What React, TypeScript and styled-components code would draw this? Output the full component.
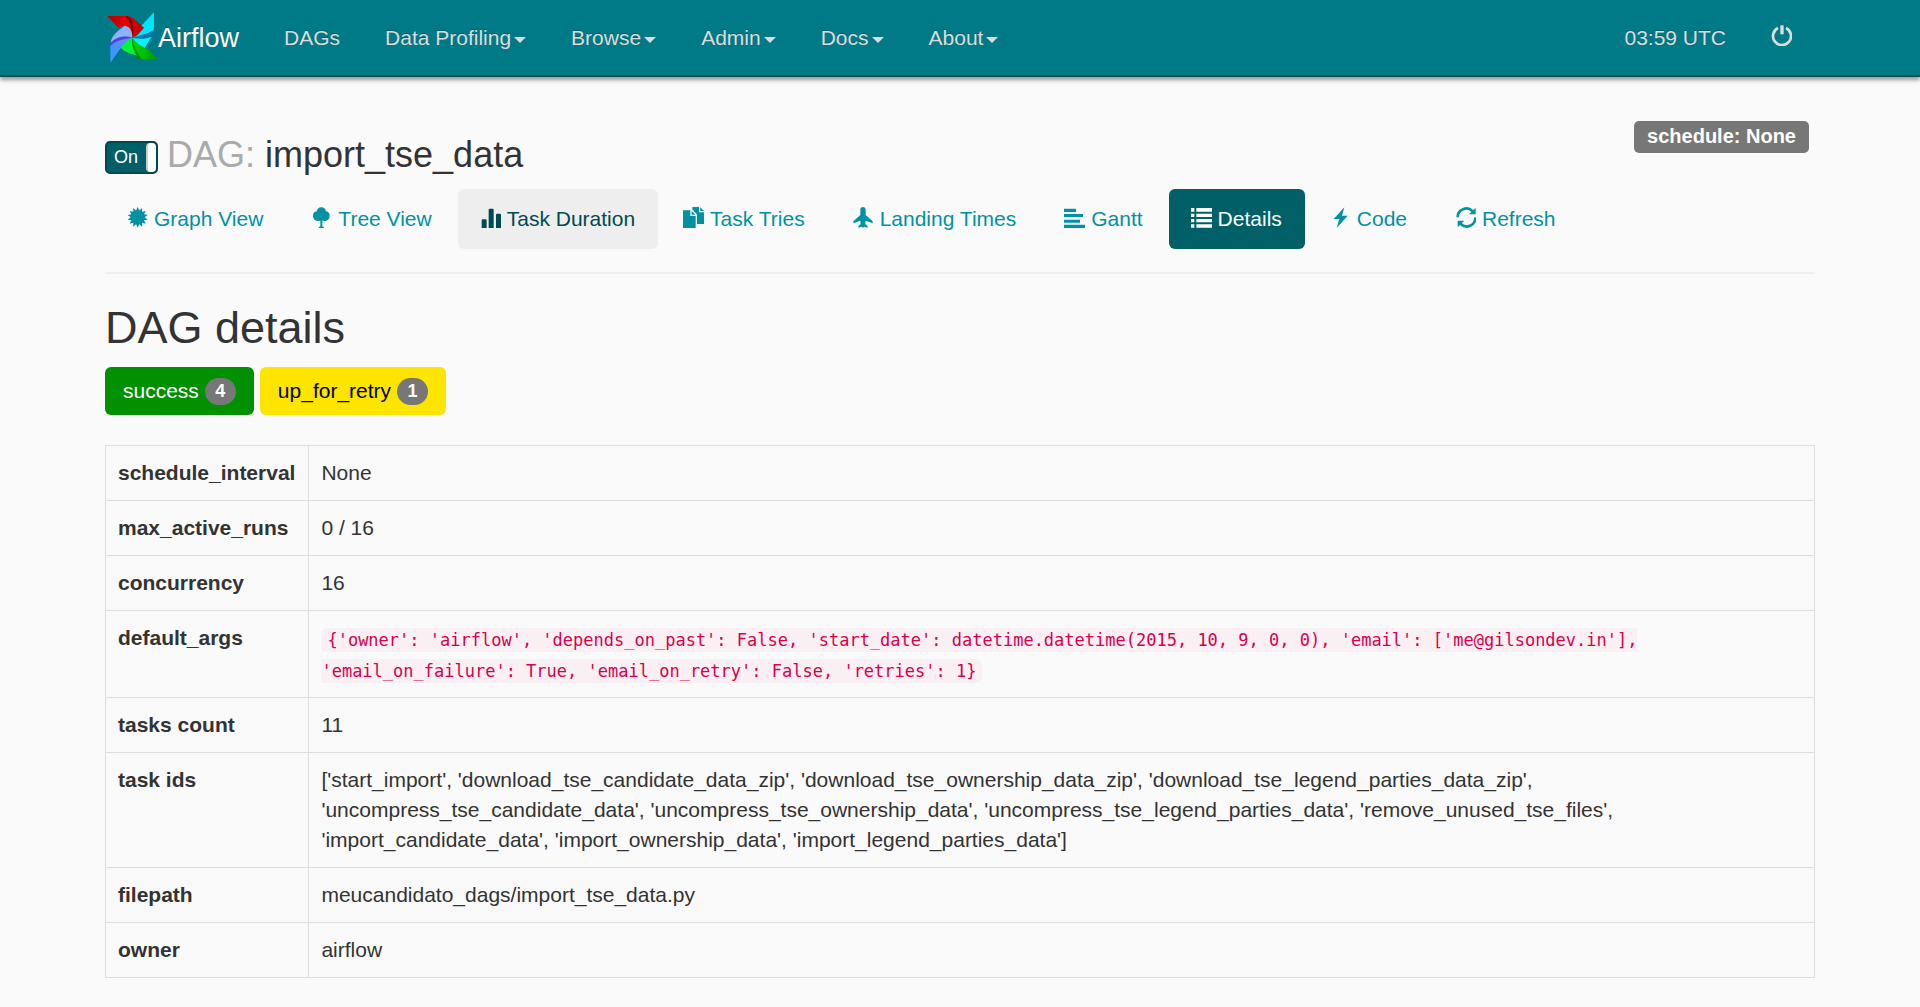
import React, { useState } from "react";
import styled, { createGlobalStyle, css } from "styled-components";

const GlobalStyle = createGlobalStyle`
  *, *::before, *::after { box-sizing: border-box; }
  body {
    margin: 0;
    background: #fafafa;
    color: #333;
    font: 21px/30px "Liberation Sans", Arial, sans-serif;
  }
`;

const container = css`
  width: 100%;
  max-width: 1710px;
  margin: 0 auto;
`;

/* ---------- top bar ---------- */

const Navbar = styled.header`
  background: #007a87;
  border-bottom: 2px solid #004a52;
  box-shadow: 0 3px 4px #999;
`;

const NavbarInner = styled.div`
  ${container}
  display: flex;
  align-items: center;
  min-height: 75px;
`;

const Brand = styled.a`
  display: flex;
  align-items: center;
  padding: 0 23px 0 2px;
  color: #fff;
  font-size: 27px;
  text-decoration: none;
  text-shadow: 0 -1px 0 rgba(0, 0, 0, 0.25);
`;

const Logo = styled.svg`
  width: 51px;
  height: 52px;
`;

const NavList = styled.ul<{ $end?: boolean }>`
  display: flex;
  gap: 1px;
  margin: 0 0 0 ${(p) => (p.$end ? "auto" : "0")};
  padding: 0;
  list-style: none;
`;

const NavLink = styled.a`
  display: flex;
  align-items: center;
  gap: 3px;
  height: 75px;
  padding: 0 22px;
  color: #dcdcdc;
  text-decoration: none;
  text-shadow: 0 -1px 0 rgba(0, 0, 0, 0.25);
`;

const PowerLink = styled(NavLink)`
  padding: 0 23px 4px 22px;
`;

const Caret = styled.span`
  margin-top: 4px;
  border: 6px solid transparent;
  border-top-color: currentColor;
  border-bottom-width: 0;
`;

const IconSvg = styled.svg`
  flex: none;
  width: 21px;
  height: 21px;
  fill: currentColor;
`;

/* ---------- DAG heading ---------- */

const Main = styled.main`
  ${container}
  padding: 44px 0 30px;
`;

const Heading = styled.div`
  display: flex;
  align-items: flex-start;
  justify-content: space-between;
  padding-right: 6px;
`;

const TitleRow = styled.div`
  display: flex;
  align-items: center;
  gap: 9px;
  padding-top: 14px;
`;

const Title = styled.h3`
  margin: 0;
  font-size: 36px;
  line-height: 40px;
  font-weight: 400;
`;

const Muted = styled.span`
  color: #aaa;
`;

const Toggle = styled.label`
  display: flex;
  align-items: stretch;
  justify-content: space-between;
  width: 53px;
  height: 33px;
  margin-top: 4px;
  border: 2px solid #00474f;
  border-radius: 5px;
  background: #005f69;
  color: #fff;
  font-size: 18px;
  line-height: 29px;
  cursor: pointer;
`;

const ToggleText = styled.span`
  padding-left: 7px;
`;

const ToggleHandle = styled.input`
  appearance: none;
  width: 10px;
  margin: 0;
  border-left: 2px solid #ccc;
  border-radius: 4px;
  background: #fff;
`;

const ScheduleLabel = styled.span`
  padding: 0 13px 2px;
  border-radius: 5px;
  background: #777;
  color: #fff;
  font-size: 20px;
  line-height: 30px;
  font-weight: 700;
`;

/* ---------- view tabs ---------- */

const Pills = styled.ul`
  display: flex;
  flex-wrap: wrap;
  gap: 3px;
  margin: 14px 0 23px;
  padding: 0;
  list-style: none;
`;

type PillState = "plain" | "hover" | "active";

const pillColors: Record<PillState, [string, string]> = {
  plain: ["transparent", "#0092a3"],
  hover: ["#eee", "#004a52"],
  active: ["#005f67", "#fff"],
};

const Pill = styled.a<{ $state: PillState }>`
  display: flex;
  align-items: center;
  gap: 6px;
  padding: 15px 23px 15px 22px;
  border-radius: 6px;
  background: ${(p) => pillColors[p.$state][0]};
  color: ${(p) => pillColors[p.$state][1]};
  text-decoration: none;

  ${IconSvg} {
    margin-bottom: 3px;
  }
`;

const Divider = styled.hr`
  margin: 0;
  border: 0;
  border-top: 2px solid #eee;
`;

/* ---------- details ---------- */

const SectionTitle = styled.h2`
  margin: 29px 0 14px;
  font-size: 45px;
  line-height: 50px;
  font-weight: 400;
`;

const States = styled.div`
  display: flex;
  gap: 6px;
  margin-bottom: 30px;
`;

const StateButton = styled.button<{ $bg: string; $fg: string }>`
  display: flex;
  align-items: center;
  gap: 6px;
  height: 48px;
  padding: 0 18px;
  border: 0;
  border-radius: 6px;
  background: ${(p) => p.$bg};
  color: ${(p) => p.$fg};
  font: inherit;
  cursor: pointer;
`;

const Badge = styled.span`
  min-width: 31px;
  border-radius: 15px;
  background: #777;
  color: #fff;
  font-size: 18px;
  line-height: 27px;
  font-weight: 700;
  text-align: center;
`;

const Table = styled.table`
  width: 100%;
  border-collapse: collapse;

  th, td {
    padding: 12px;
    border: 1px solid #ddd;
    text-align: left;
    vertical-align: top;
  }
  th {
    width: 1px;
    padding-right: 13px;
    white-space: nowrap;
  }
  tr:nth-child(odd) {
    background: #f9f9f9;
  }
`;

const CodeBlock = styled.div`
  line-height: 31px;
`;

const Code = styled.code`
  padding: 2px 6px;
  border-radius: 6px;
  background: #faf0f3;
  color: #d6004d;
  font-family: "DejaVu Sans Mono", monospace;
  font-size: 17px;
  line-height: 20px;
`;

/* ---------- icons (63-unit grid) ---------- */

const burst = Array.from({ length: 28 }, (_, i) => {
  const r = i % 2 ? 21 : 31;
  const a = (i * Math.PI) / 14;
  return `${(32 + r * Math.sin(a)).toFixed(1)},${(31 - r * Math.cos(a)).toFixed(1)}`;
}).join(" ");

const icons = {
  certificate: <polygon points={burst} />,
  tree: (
    <path d="M31 1C23 1 18 6 17 13C10 14 5 20 6 28C6 36 12 42 19 42C23 42 26 42 28 40V58L23 61V63H39V61L34 58V40C36 42 39 42 43 42C50 42 56 36 56 28C57 20 52 14 45 13C44 6 39 1 31 1Z" />
  ),
  bars: (
    <path d="M5 63V40Q5 37 8 37H17Q20 37 20 40V63ZM26 63V8Q26 5 29 5H38Q41 5 41 8V63ZM48 63V23Q48 20 51 20H60Q63 20 63 23V63Z" />
  ),
  duplicate: (
    <path d="M0 10H22V27H38V63H0ZM26 11L37 23H26ZM28 0H48V16H63V51H42V23L28 7ZM52 1L63 12H52Z" />
  ),
  plane: (
    <path d="M30 0C35 0 38 4 38 9V24L59 43V49L38 41L37 51L44 58V62L33 59L30 63L27 59L16 62V58L23 51L22 41L1 49V43L22 24V9C22 4 25 0 30 0Z" />
  ),
  align: <path d="M0 5H36V15H0ZM0 21H57V30H0ZM0 38H48V47H0ZM0 53H63V63H0Z" />,
  list: (
    <path d="M0 3H10V14H0ZM16 3H63V14H16ZM0 20H10V30H0ZM16 20H63V30H16ZM0 36H10V46H0ZM16 36H63V46H16ZM0 52H10V62H0ZM16 52H63V62H16Z" />
  ),
  flash: <path d="M43 1L11 36H28L20 63L53 26H36Z" />,
  refresh: (
    <>
      <g fill="none" stroke="currentColor" strokeWidth="8">
        <path d="M8 31A26 26 0 0 1 53 13" />
        <path d="M61 31A26 26 0 0 1 16 50" />
      </g>
      <path d="M62 3V22H42ZM8 61V41H28Z" />
    </>
  ),
  power: (
    <>
      <path
        d="M21 9A27 27 0 1 0 45 9"
        fill="none"
        stroke="currentColor"
        strokeWidth="8"
      />
      <path d="M28 1H38V28H28Z" />
    </>
  ),
};

type IconName = keyof typeof icons;

const Icon = ({ name }: { name: IconName }) => (
  <IconSvg viewBox="0 0 63 63" aria-hidden="true">
    {icons[name]}
  </IconSvg>
);

const Pinwheel = () => (
  <Logo viewBox="20 25 151 154" aria-hidden="true">
    <defs>
      <linearGradient id="red" x1="0" x2="1">
        <stop offset="0" stopColor="#a80000" />
        <stop offset="0.5" stopColor="#e80000" />
        <stop offset="1" stopColor="#c40000" />
      </linearGradient>
      <linearGradient id="blue" x1="0" y1="1" x2="1" y2="0">
        <stop offset="0" stopColor="#2f9bff" />
        <stop offset="1" stopColor="#6d86ff" />
      </linearGradient>
      <linearGradient id="green" x1="0" x2="1">
        <stop offset="0" stopColor="#00d800" />
        <stop offset="1" stopColor="#009c00" />
      </linearGradient>
    </defs>
    <path d="M21 37H76C92 37 99 44 130 72L109 97L95 101C92 80 84 67 72 66L54 72Z" fill="url(#red)" />
    <path d="M74 37C94 38 104 60 95 101C94 76 90 54 74 37Z" fill="#7d0000" />
    <path d="M72 66C88 68 96 82 95 101C72 94 52 98 31 116C34 96 46 86 72 66Z" fill="#8fb2ff" />
    <path d="M30 118C44 100 66 94 95 101C72 108 48 114 31 135Z" fill="#5a3fe0" />
    <path d="M30 175V126C46 108 70 106 95 101L62 130Z" fill="url(#blue)" />
    <path d="M159 26V80C146 88 124 96 95 101L110 94L130 72L122 66Z" fill="#00e5ff" />
    <path d="M159 76C148 88 124 92 95 101C116 112 148 108 155 91Z" fill="#0878ad" />
    <path d="M95 101C112 106 132 106 152 98L129 135C116 128 104 116 95 101Z" fill="#00f4ff" />
    <path d="M95 101C108 122 134 130 144 138L169 165H112C100 158 94 130 95 101Z" fill="url(#green)" />
    <path d="M95 101C98 126 108 140 122 165H108C94 150 90 128 95 101Z" fill="#008a1e" />
    <path d="M95 101C92 122 98 140 108 154C86 148 70 142 61 130C70 120 80 108 95 101Z" fill="#00f53a" />
  </Logo>
);

/* ---------- data ---------- */

const menus = ["Data Profiling", "Browse", "Admin", "Docs", "About"];

const views: { label: string; icon: IconName; state?: PillState }[] = [
  { label: "Graph View", icon: "certificate" },
  { label: "Tree View", icon: "tree" },
  { label: "Task Duration", icon: "bars", state: "hover" },
  { label: "Task Tries", icon: "duplicate" },
  { label: "Landing Times", icon: "plane" },
  { label: "Gantt", icon: "align" },
  { label: "Details", icon: "list", state: "active" },
  { label: "Code", icon: "flash" },
  { label: "Refresh", icon: "refresh" },
];

const states = [
  { name: "success", count: 4, bg: "#009000", fg: "#fff" },
  { name: "up_for_retry", count: 1, bg: "#fde500", fg: "#000" },
];

const defaultArgs =
  "{'owner': 'airflow', 'depends_on_past': False, 'start_date': datetime.datetime(2015, 10, 9, 0, 0), 'email': ['me@gilsondev.in'], 'email_on_failure': True, 'email_on_retry': False, 'retries': 1}";

const taskIds = [
  "start_import",
  "download_tse_candidate_data_zip",
  "download_tse_ownership_data_zip",
  "download_tse_legend_parties_data_zip",
  "uncompress_tse_candidate_data",
  "uncompress_tse_ownership_data",
  "uncompress_tse_legend_parties_data",
  "remove_unused_tse_files",
  "import_candidate_data",
  "import_ownership_data",
  "import_legend_parties_data",
];

const details: [string, React.ReactNode][] = [
  ["schedule_interval", "None"],
  ["max_active_runs", "0 / 16"],
  ["concurrency", "16"],
  [
    "default_args",
    <CodeBlock>
      <Code>{defaultArgs}</Code>
    </CodeBlock>,
  ],
  ["tasks count", taskIds.length],
  ["task ids", `[${taskIds.map((id) => `'${id}'`).join(", ")}]`],
  ["filepath", "meucandidato_dags/import_tse_data.py"],
  ["owner", "airflow"],
];

export default function App() {
  const [enabled, setEnabled] = useState(true);

  return (
    <>
      <GlobalStyle />
      <Navbar>
        <NavbarInner>
          <Brand href="#">
            <Pinwheel />
            Airflow
          </Brand>
          <NavList>
            <li>
              <NavLink href="#">DAGs</NavLink>
            </li>
            {menus.map((menu) => (
              <li key={menu}>
                <NavLink href="#">
                  {menu}
                  <Caret />
                </NavLink>
              </li>
            ))}
          </NavList>
          <NavList $end>
            <li>
              <NavLink href="#">03:59 UTC</NavLink>
            </li>
            <li>
              <PowerLink href="#" aria-label="Log out">
                <Icon name="power" />
              </PowerLink>
            </li>
          </NavList>
        </NavbarInner>
      </Navbar>

      <Main>
        <Heading>
          <TitleRow>
            <Toggle>
              <ToggleText>{enabled ? "On" : "Off"}</ToggleText>
              <ToggleHandle
                type="checkbox"
                checked={enabled}
                onChange={(e) => setEnabled(e.target.checked)}
              />
            </Toggle>
            <Title>
              <Muted>DAG:</Muted> import_tse_data
            </Title>
          </TitleRow>
          <ScheduleLabel>schedule: None</ScheduleLabel>
        </Heading>

        <Pills>
          {views.map(({ label, icon, state = "plain" }) => (
            <li key={label}>
              <Pill href="#" $state={state}>
                <Icon name={icon} />
                {label}
              </Pill>
            </li>
          ))}
        </Pills>
        <Divider />

        <SectionTitle>DAG details</SectionTitle>
        <States>
          {states.map((s) => (
            <StateButton key={s.name} type="button" $bg={s.bg} $fg={s.fg}>
              {s.name}
              <Badge>{s.count}</Badge>
            </StateButton>
          ))}
        </States>

        <Table>
          <tbody>
            {details.map(([name, value]) => (
              <tr key={name}>
                <th scope="row">{name}</th>
                <td>{value}</td>
              </tr>
            ))}
          </tbody>
        </Table>
      </Main>
    </>
  );
}
